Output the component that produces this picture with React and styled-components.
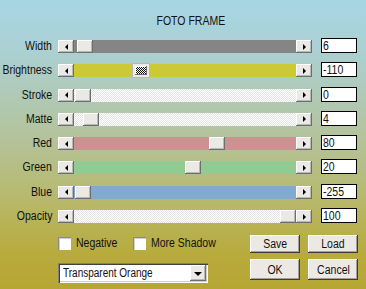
import styled, { createGlobalStyle } from "styled-components";

const GlobalStyle = createGlobalStyle`
  html, body { margin: 0; padding: 0; }
  body {
    font-family: "Liberation Sans", Arial, sans-serif;
  }
`;

const raised = `
  background: #ebe9e5;
  box-shadow: inset -1px -1px #6e6e6e, inset 1px 1px #ffffff, inset -2px -2px #b8b8b4;
`;

// the dialog font is a narrow sans; squeeze Liberation Sans to match
const Narrow = styled.span`
  display: inline-block;
  white-space: nowrap;
  transform: scaleX(${(p) => p.$scale || 0.84});
  transform-origin: ${(p) => p.$origin || "center"};
`;

const Window = styled.div`
  width: 366px;
  height: 289px;
  box-sizing: border-box;
  padding-top: 14px;
  overflow: hidden;
  color: #111;
  font-size: 12.5px;
  background: linear-gradient(180deg, #a6d6e4 0%, #abd0d2 18%, #b3c4a0 45%, #b7b96e 68%, #b8ab3c 88%, #b7a634 100%);
`;

const Title = styled.div`
  display: flex;
  justify-content: center;
  height: 15px;
  line-height: 15px;
  padding-left: 15px;
`;

const Sliders = styled.div`
  display: flex;
  flex-direction: column;
  gap: 9.3px;
  margin-top: 9px;
`;

const Row = styled.div`
  display: flex;
  align-items: flex-end;
  height: 15px;
`;

const Label = styled.div`
  display: flex;
  justify-content: flex-end;
  width: 52px;
  margin-right: 6px;
  line-height: 13px;
  height: 13px;
`;

const Scroll = styled.div`
  display: flex;
  width: 254px;
  height: 13px;
`;

const ArrowButton = styled.div`
  ${raised}
  width: 16px;
  height: 13px;
  flex: none;
  display: flex;
  align-items: center;
  justify-content: center;
`;

const Arrow = styled.span`
  width: 0;
  height: 0;
  border-top: 3px solid transparent;
  border-bottom: 3px solid transparent;
  ${(p) => (p.$dir === "left" ? "border-right: 3px solid #000;" : "border-left: 3px solid #000;")}
`;

const Track = styled.div`
  position: relative;
  flex: 1;
  background: ${(p) =>
    p.$dither
      ? "repeating-conic-gradient(#ffffff 0 25%, #e4e4e4 0 50%) 0 0 / 2px 2px"
      : p.$color};
`;

const Thumb = styled.div`
  ${raised}
  position: absolute;
  top: 0;
  width: 16px;
  height: 13px;
  box-sizing: border-box;
  ${(p) =>
    p.$pressed &&
    `
    background: repeating-conic-gradient(#111 0 25%, #f4f4f4 0 50%) 0 0 / 2px 2px;
    border: 2px solid #ebe9e5;
    box-shadow: inset -1px -1px #6e6e6e, inset 1px 1px #ffffff, 0 0 0 1px #b8b8b4;
  `}
`;

const ValueBox = styled.div`
  width: 36px;
  height: 15px;
  box-sizing: border-box;
  margin-left: 9px;
  border: 1px solid #000;
  background: #fff;
  padding-left: 1px;
  line-height: 14px;
  overflow: hidden;
`;

const Bottom = styled.div`
  display: flex;
  margin-top: 12px;
  padding-left: 58px;
`;

const LeftCol = styled.div`
  width: 192px;
`;

const Checks = styled.div`
  display: flex;
  align-items: center;
  margin-top: 2px;
  height: 13px;
`;

const CheckItem = styled.label`
  display: flex;
  align-items: center;
  gap: 5px;
  width: ${(p) => (p.$width ? `${p.$width}px` : "auto")};
  line-height: 13px;
`;

const Box = styled.span`
  width: 13px;
  height: 13px;
  flex: none;
  box-sizing: border-box;
  background: #fff;
  box-shadow: inset 1px 1px #8a8a8a, inset 2px 2px #d0d0d0, inset -1px -1px #ffffff;
`;

const Select = styled.div`
  display: flex;
  align-items: center;
  width: 150px;
  height: 20px;
  box-sizing: border-box;
  margin-top: 13px;
  padding: 2px;
  background: #fff;
  box-shadow: inset 1px 1px #808080, inset 2px 2px #404040, inset -1px -1px #ffffff, inset -2px -2px #d4d0c8;
`;

const SelectText = styled.div`
  flex: 1;
  padding-left: 3px;
  overflow: hidden;
`;

const SelectButton = styled.div`
  ${raised}
  width: 16px;
  height: 16px;
  flex: none;
  display: flex;
  align-items: center;
  justify-content: center;
`;

const DownArrow = styled.span`
  width: 0;
  height: 0;
  border-left: 4px solid transparent;
  border-right: 4px solid transparent;
  border-top: 4px solid #000;
  margin-top: 1px;
`;

const Buttons = styled.div`
  display: grid;
  grid-template-columns: 50px 50px;
  grid-template-rows: 18px 21px;
  column-gap: 8px;
  row-gap: 6px;
`;

const Button = styled.div`
  display: flex;
  align-items: center;
  justify-content: center;
  background: #ece9e4;
  box-shadow: inset -1px -1px #3c3c3c, inset 1px 1px #ffffff, inset -2px -2px #a0a09c;
`;

const sliders = [
  { label: "Width", value: "6", color: "#858585", thumb: 3 },
  { label: "Brightness", value: "-110", color: "#cbc935", thumb: 59, pressed: true },
  { label: "Stroke", value: "0", dither: true, thumb: 1 },
  { label: "Matte", value: "4", dither: true, thumb: 9 },
  { label: "Red", value: "80", color: "#cc9292", thumb: 135 },
  { label: "Green", value: "20", color: "#92cb92", thumb: 111 },
  { label: "Blue", value: "-255", color: "#80aad0", thumb: 1 },
  { label: "Opacity", value: "100", dither: true, thumb: 206 },
];

const Slider = ({ s }) => (
  <Row>
    <Label>
      <Narrow $origin="right">{s.label}</Narrow>
    </Label>
    <Scroll>
      <ArrowButton>
        <Arrow $dir="left" />
      </ArrowButton>
      <Track $color={s.color} $dither={s.dither}>
        <Thumb $pressed={s.pressed} style={{ left: s.thumb }} />
      </Track>
      <ArrowButton>
        <Arrow $dir="right" />
      </ArrowButton>
    </Scroll>
    <ValueBox>
      <Narrow $origin="left">{s.value}</Narrow>
    </ValueBox>
  </Row>
);

export default function App() {
  return (
    <>
      <GlobalStyle />
      <Window>
        <Title>
          <Narrow>FOTO FRAME</Narrow>
        </Title>
        <Sliders>
          {sliders.map((s) => (
            <Slider key={s.label} s={s} />
          ))}
        </Sliders>
        <Bottom>
          <LeftCol>
            <Checks>
              <CheckItem $width={75}>
                <Box />
                <Narrow $origin="left">Negative</Narrow>
              </CheckItem>
              <CheckItem>
                <Box />
                <Narrow $origin="left">More Shadow</Narrow>
              </CheckItem>
            </Checks>
            <Select>
              <SelectText>
                <Narrow $origin="left" $scale={0.8}>Transparent Orange</Narrow>
              </SelectText>
              <SelectButton>
                <DownArrow />
              </SelectButton>
            </Select>
          </LeftCol>
          <Buttons>
            <Button>
              <Narrow>Save</Narrow>
            </Button>
            <Button>
              <Narrow>Load</Narrow>
            </Button>
            <Button>
              <Narrow>OK</Narrow>
            </Button>
            <Button>
              <Narrow>Cancel</Narrow>
            </Button>
          </Buttons>
        </Bottom>
      </Window>
    </>
  );
}
